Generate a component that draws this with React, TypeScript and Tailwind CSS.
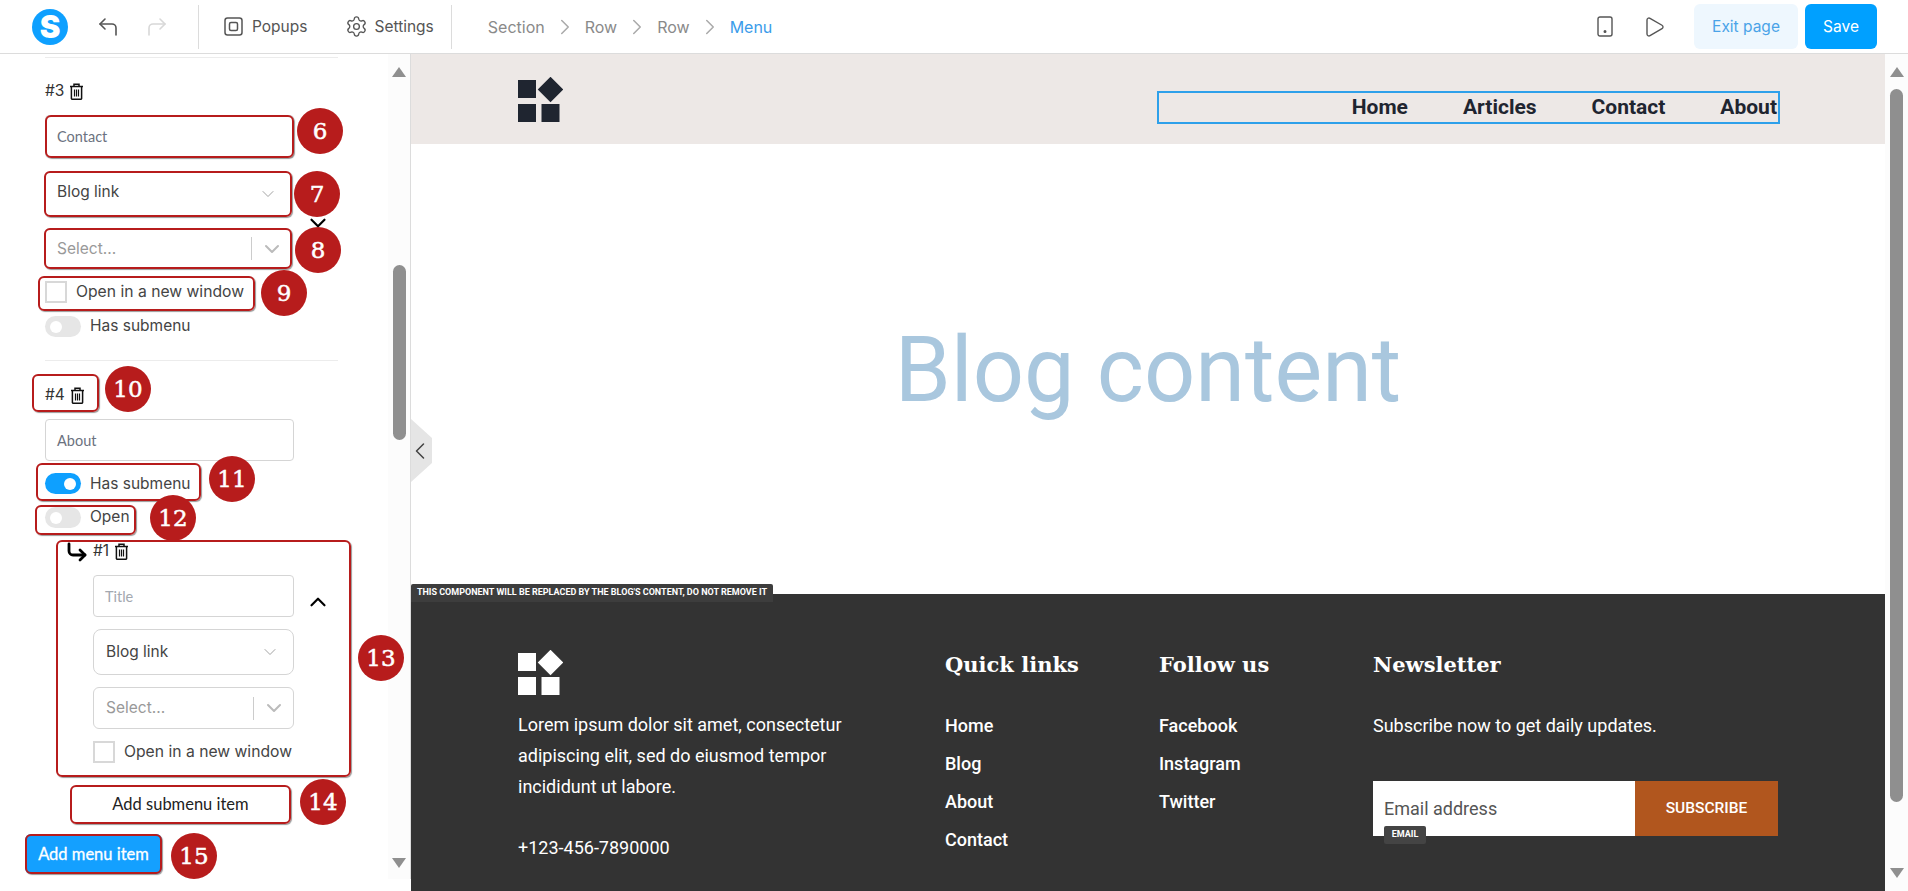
import React from "react"
import { ChevronDown, ChevronLeft, ChevronRight, ChevronUp, CornerDownRight, CornerUpLeft, CornerUpRight, Play, Settings } from "lucide-react"

const Trash = () => (
  <svg width="15" height="17" viewBox="0 0 15 17" fill="none" stroke="#111" strokeWidth="1.5" className="shrink-0">
    <path d="M1 3.5h13M5 3.2V1.2h5v2M2.4 3.5v12a.8.8 0 0 0 .8.8h8.600a.8.8 0 0 0 .8-.8v-12" />
    <path d="M5.500 6.500v7M7.500 6.500v7M9.500 6.500v7" strokeWidth="1.200" />
  </svg>
)

const Logo = ({ color }: { color: string }) => (
  <svg width="45" height="45" viewBox="0 0 45 45" fill={color}>
    <rect x="0" y="3" width="18" height="18" />
    <rect x="23.500" y="3.500" width="18" height="18" transform="rotate(45 32.500 12.500)" />
    <rect x="0" y="27" width="18" height="18" />
    <rect x="23.500" y="27" width="18" height="18" />
  </svg>
)

// red annotation frame + numbered badge, both lie over the item
const Marked = ({
  n,
  box,
  badge,
  className,
  children,
}: {
  n: number
  box: string
  badge: string
  className?: string
  children: React.ReactNode
}) => (
  <div className={`relative ${className ?? ""}`}>
    {children}
    <div className={`absolute pointer-events-none border-2 border-[#b71c1c] rounded-[6px] shadow-[1px_1px_1px_rgba(0,0,0,0.4)] ${box}`} />
    <div
      className={`absolute z-10 w-[46px] h-[46px] rounded-full bg-[#b71c1c] text-white flex items-center justify-center text-[23px] [-webkit-text-stroke:0.5px_white] font-['DejaVu_Serif',serif] ${badge}`}
    >
      {n}
    </div>
  </div>
)

const TextBox = ({ text, width, height, dim }: { text: string; width: string; height: string; dim?: boolean }) => (
  <div className={`${width} ${height} border border-[#d5d5d5] rounded-[4px] bg-white flex items-center pl-[11px] pt-px font-['Lato',sans-serif] text-[14.500px] ${dim ? "text-[#a3a8b0]" : "text-[#6b7280]"}`}>
    {text}
  </div>
)

const LinkSelect = ({ width, lift }: { width: string; lift?: boolean }) => (
  <div className={`${width} h-[46px] border border-[#d5d5d5] rounded-[8px] bg-white flex items-center justify-between pl-[12px] pr-[13px] text-[15.500px] text-[#444]`}>
    <span className={lift ? "mb-[4px]" : ""}>Blog link</span>
    <ChevronDown size={20} strokeWidth={1.100} className="text-[#999]" />
  </div>
)

const PageSelect = ({ width, height }: { width: string; height: string }) => (
  <div className={`${width} ${height} border border-[#d5d5d5] rounded-[6px] bg-white flex items-center pl-[12px] text-[15.500px] text-[#999]`}>
    <span className="flex-1">Select...</span>
    <div className="w-px h-[23px] bg-[#ccc]" />
    <div className="w-[39px] flex justify-center">
      <ChevronDown size={24} strokeWidth={2} className="text-[#bbb]" />
    </div>
  </div>
)

const Check = ({ label }: { label: string }) => (
  <div className="h-[22px] w-fit flex items-center gap-[9px] text-[15.700px] text-[#444]">
    <div className="w-[22px] h-[22px] border-2 border-[#d8d8d8] bg-white" />
    {label}
  </div>
)

const Toggle = ({ on, label }: { on?: boolean; label: string }) => (
  <div className="h-[21px] w-fit flex items-center gap-[9px] text-[15.500px] text-[#444]">
    <div className={`w-[36px] h-[21px] rounded-full flex items-center px-[5px] ${on ? "bg-[#0ea0ff] justify-end" : "bg-[#e6e6e6] justify-start"}`}>
      <div className="w-[12px] h-[12px] rounded-full bg-white" />
    </div>
    <span className={on ? "" : "-mt-[2px]"}>{label}</span>
  </div>
)

const ItemTitle = ({ label }: { label: string }) => (
  <div className="h-[22px] w-fit flex items-center gap-[5px] text-[15.500px] text-[#333]">
    {label}
    <Trash />
  </div>
)

const Crumb = () => <ChevronRight size={26} strokeWidth={1.400} className="mx-[7px] text-[#aaa]" />

const Header = () => (
  <header className="h-[54px] shrink-0 border-b border-[#dcdcdc] bg-white flex items-center font-['Inter',sans-serif]">
    <div className="ml-[32px] w-[36px] h-[36px] rounded-full bg-[#0ea0ff] flex items-center justify-center text-white text-[31px] font-black leading-none">
      S
    </div>
    <CornerUpLeft size={24} strokeWidth={1.600} className="ml-[28px] text-[#555]" />
    <CornerUpRight size={24} strokeWidth={1.600} className="ml-[25px] text-[#d8d8d8]" />
    <div className="ml-[29px] w-px h-[44px] bg-[#dcdcdc]" />
    <svg width="19" height="19" viewBox="0 0 19 19" fill="none" stroke="#555" strokeWidth="1.500" className="ml-[25px]">
      <rect x="1" y="1" width="17" height="17" rx="2.500" />
      <rect x="5.500" y="5.500" width="8" height="8" rx="1.500" />
    </svg>
    <span className="ml-[9px] text-[15.500px] text-[#555]">Popups</span>
    <Settings size={23} strokeWidth={1.400} className="ml-[38px] text-[#555]" />
    <span className="ml-[6px] text-[15.500px] text-[#555]">Settings</span>
    <div className="ml-[17px] w-px h-[44px] bg-[#dcdcdc]" />
    <nav className="ml-[36px] flex items-center text-[16px] text-[#8a8a8a]">
      <span>Section</span>
      <Crumb />
      <span>Row</span>
      <Crumb />
      <span>Row</span>
      <Crumb />
      <span className="text-[#3b9cea]">Menu</span>
    </nav>
    <div className="ml-auto flex items-center pr-[31px]">
      <svg width="16" height="21" viewBox="0 0 16 21" fill="none" stroke="#555" strokeWidth="1.400">
        <rect x="1" y="1" width="14" height="19" rx="2" />
        <circle cx="8" cy="15.500" r="0.800" fill="#555" />
      </svg>
      <Play size={24} strokeWidth={1.400} className="ml-[29px] text-[#555]" />
      <div className="ml-[28px] w-[104px] h-[45px] rounded-[6px] bg-[#eef7fe] text-[#4aa3e8] text-[15.500px] flex items-center justify-center">
        Exit page
      </div>
      <div className="ml-[7px] w-[72px] h-[45px] rounded-[6px] bg-[#00a0ff] text-white text-[15.500px] flex items-center justify-center">
        Save
      </div>
    </div>
  </header>
)

const Sidebar = () => (
  <aside className="relative w-[411px] shrink-0 border-r border-[#dcdcdc] bg-white flex font-['Inter',sans-serif] h-[825px]">
    <div className="w-[388px] shrink-0 pl-[45px]">
      <div className="mt-[3px] w-[293px] h-px bg-[#ececec]" />
      <div className="mt-[22px]">
        <ItemTitle label="#3" />
      </div>
      <Marked n={6} box="inset-0" badge="left-[252px] -top-[7px]" className="mt-[13px] w-[249px]">
        <TextBox text="Contact" width="w-[249px]" height="h-[43px]" />
      </Marked>
      <Marked n={7} box="inset-0" badge="left-[250px] top-0" className="mt-[13px] -ml-px w-[248px]">
        <LinkSelect width="w-[248px]" lift />
      </Marked>
      <Marked n={8} box="inset-0" badge="left-[251px] -top-px" className="mt-[11px] -ml-px w-[248px]">
        <ChevronDown size={26} strokeWidth={2} className="absolute left-[261px] -top-[18px] text-black" />
        <PageSelect width="w-[248px]" height="h-[41px]" />
      </Marked>
      <Marked n={9} box="-left-[7px] -top-[5px] w-[217px] h-[35px]" badge="left-[216px] -top-[11px]" className="mt-[12px] w-fit">
        <Check label="Open in a new window" />
      </Marked>
      <div className="mt-[13px]">
        <Toggle label="Has submenu" />
      </div>
      <div className="mt-[23px] w-[293px] h-px bg-[#ececec]" />
      <Marked n={10} box="-left-[13px] -top-[10px] w-[67px] h-[38px]" badge="left-[60px] -top-[18px]" className="mt-[23px] w-fit">
        <ItemTitle label="#4" />
      </Marked>
      <div className="mt-[13px]">
        <TextBox text="About" width="w-[249px]" height="h-[42px]" />
      </div>
      <Marked n={11} box="-left-[9px] -top-[10px] w-[165px] h-[38px]" badge="left-[164px] -top-[17px]" className="mt-[12px] w-fit">
        <Toggle on label="Has submenu" />
      </Marked>
      <Marked n={12} box="-left-[10px] -top-[2px] w-[101px] h-[30px]" badge="left-[105px] -top-[12px]" className="mt-[13px] w-fit">
        <Toggle label="Open" />
      </Marked>
      <Marked n={13} box="inset-0" badge="left-[302px] top-[95px]" className="mt-[12px] ml-[11px] w-[295px] h-[237px] pl-[37px]">
        <div className="relative h-[22px]">
          <CornerDownRight size={24} strokeWidth={2.800} className="absolute -left-[28px] top-0 text-black" />
          <ItemTitle label="#1" />
        </div>
        <div className="relative mt-[13px]">
          <TextBox text="Title" width="w-[201px]" height="h-[42px]" dim />
          <ChevronUp size={26} strokeWidth={2} className="absolute left-[212px] top-[14px] text-black" />
        </div>
        <div className="mt-[12px]">
          <LinkSelect width="w-[201px]" />
        </div>
        <div className="mt-[12px]">
          <PageSelect width="w-[201px]" height="h-[42px]" />
        </div>
        <div className="mt-[12px]">
          <Check label="Open in a new window" />
        </div>
      </Marked>
      <Marked n={14} box="inset-0" badge="left-[230px] -top-[6px]" className="mt-[8px] ml-[25px] w-[221px]">
        <div className="h-[39px] rounded-[6px] bg-white flex items-center justify-center font-['Lato',sans-serif] text-[16.500px] text-[#222]">
          Add submenu item
        </div>
      </Marked>
      <Marked n={15} box="inset-0" badge="left-[146px] -top-px" className="mt-[10px] -ml-[20px] w-[137px]">
        <div className="h-[40px] rounded-[6px] bg-[#14a0ff] flex items-center justify-center font-['Lato',sans-serif] text-[16.500px] text-white [-webkit-text-stroke:0.3px_white]">
          Add menu item
        </div>
      </Marked>
    </div>
    <div className="relative w-[22px] flex flex-col items-center bg-[#fcfcfc]">
      <div className="w-0 h-0 mt-[13px] border-x-[7px] border-x-transparent border-b-[10px] border-b-[#8f8f8f]" />
      <div className="mt-[188px] w-[13px] h-[175px] rounded-full bg-[#8f8f8f]" />
      <div className="w-0 h-0 mt-[418px] border-x-[7px] border-x-transparent border-t-[10px] border-t-[#8f8f8f]" />
    </div>
    <div className="absolute left-[411px] top-[365px] w-[21px] h-[63px] bg-[#e5e5e5] [clip-path:polygon(0_0,100%_30%,100%_70%,0_100%)] flex items-center justify-center z-20">
      <ChevronLeft size={28} strokeWidth={1.300} className="shrink-0 text-[#444] mr-[3px]" />
    </div>
  </aside>
)

const FooterLinks = ({ title, links, width }: { title: string; links: string[]; width: string }) => (
  <div className={`${width} shrink-0`}>
    <h3 className="mt-[4px] h-[22px] font-['DejaVu_Serif',serif] font-bold text-[21px] leading-[22px]">{title}</h3>
    <ul className="mt-[38px] flex flex-col gap-[14px] text-[18px] font-medium leading-[24px]">
      {links.map((l) => (
        <li key={l}>{l}</li>
      ))}
    </ul>
  </div>
)

const Preview = () => (
  <main className="flex-1 min-w-0 flex flex-col font-['Roboto',sans-serif] overflow-hidden h-[837px]">
    <section className="h-[90px] shrink-0 bg-[#ede8e6] flex items-start justify-between pl-[107px] pr-[105px]">
      <div className="mt-[23px]">
        <Logo color="#1f2530" />
      </div>
      <div className="mt-[37px] w-[623px] h-[33px] border-2 border-[#2ea0ea] flex items-center justify-end gap-[55px] text-[21px] font-bold text-[#1f2530] pr-px">
        <span>Home</span>
        <span>Articles</span>
        <span>Contact</span>
        <span>About</span>
      </div>
    </section>
    <section className="h-[450px] shrink-0 bg-white flex items-center justify-center pt-[4px] text-[90px] text-[#a9c7de] leading-none">
      Blog content
    </section>
    <footer className="relative flex-1 bg-[#333] text-white flex pl-[107px] pt-[56px]">
      <div className="absolute left-0 -top-[10px] h-[18px] w-[362px] bg-[#3d3d3d] rounded-t-[2px] flex items-center justify-center text-[9px] font-bold uppercase whitespace-nowrap">
        This component will be replaced by the blog's content, do not remove it
      </div>
      <div className="w-[427px] shrink-0">
        <Logo color="#fff" />
        <p className="mt-[14px] text-[18px] leading-[31px]">
          Lorem ipsum dolor sit amet, consectetur
          <br />
          adipiscing elit, sed do eiusmod tempor
          <br />
          incididunt ut labore.
        </p>
        <p className="mt-[30px] text-[18px] leading-[31px]">+123-456-7890000</p>
      </div>
      <FooterLinks title="Quick links" links={["Home", "Blog", "About", "Contact"]} width="w-[214px]" />
      <FooterLinks title="Follow us" links={["Facebook", "Instagram", "Twitter"]} width="w-[214px]" />
      <div className="w-[405px] shrink-0">
        <h3 className="mt-[4px] h-[22px] font-['DejaVu_Serif',serif] font-bold text-[21px] leading-[22px]">Newsletter</h3>
        <p className="mt-[38px] text-[18px] leading-[24px]">Subscribe now to get daily updates.</p>
        <div className="relative mt-[43px] flex h-[55px]">
          <div className="w-[262px] bg-white text-[#555] text-[18px] flex items-center pl-[11px] pb-px">Email address</div>
          <div className="w-[143px] bg-[#b1561e] text-[15.500px] font-medium flex items-center justify-center">SUBSCRIBE</div>
          <div className="absolute left-[11px] top-[45px] w-[42px] h-[18px] bg-[#444] rounded-[2px] flex items-center justify-center text-[9px] font-bold">
            EMAIL
          </div>
        </div>
      </div>
    </footer>
  </main>
)

const PageScrollbar = () => (
  <div className="w-[23px] shrink-0 h-[837px] bg-[#fcfcfc] flex flex-col items-center">
    <div className="w-0 h-0 mt-[13px] border-x-[7px] border-x-transparent border-b-[10px] border-b-[#8f8f8f]" />
    <div className="mt-[12px] w-[13px] h-[713px] rounded-full bg-[#8f8f8f]" />
    <div className="w-0 h-0 mt-[66px] border-x-[7px] border-x-transparent border-t-[10px] border-t-[#8f8f8f]" />
  </div>
)

export default function App() {
  return (
    <div className="w-[1908px] h-[891px] overflow-hidden bg-white flex flex-col">
      <Header />
      <div className="flex flex-1 min-h-0 items-start">
        <Sidebar />
        <Preview />
        <PageScrollbar />
      </div>
    </div>
  )
}
